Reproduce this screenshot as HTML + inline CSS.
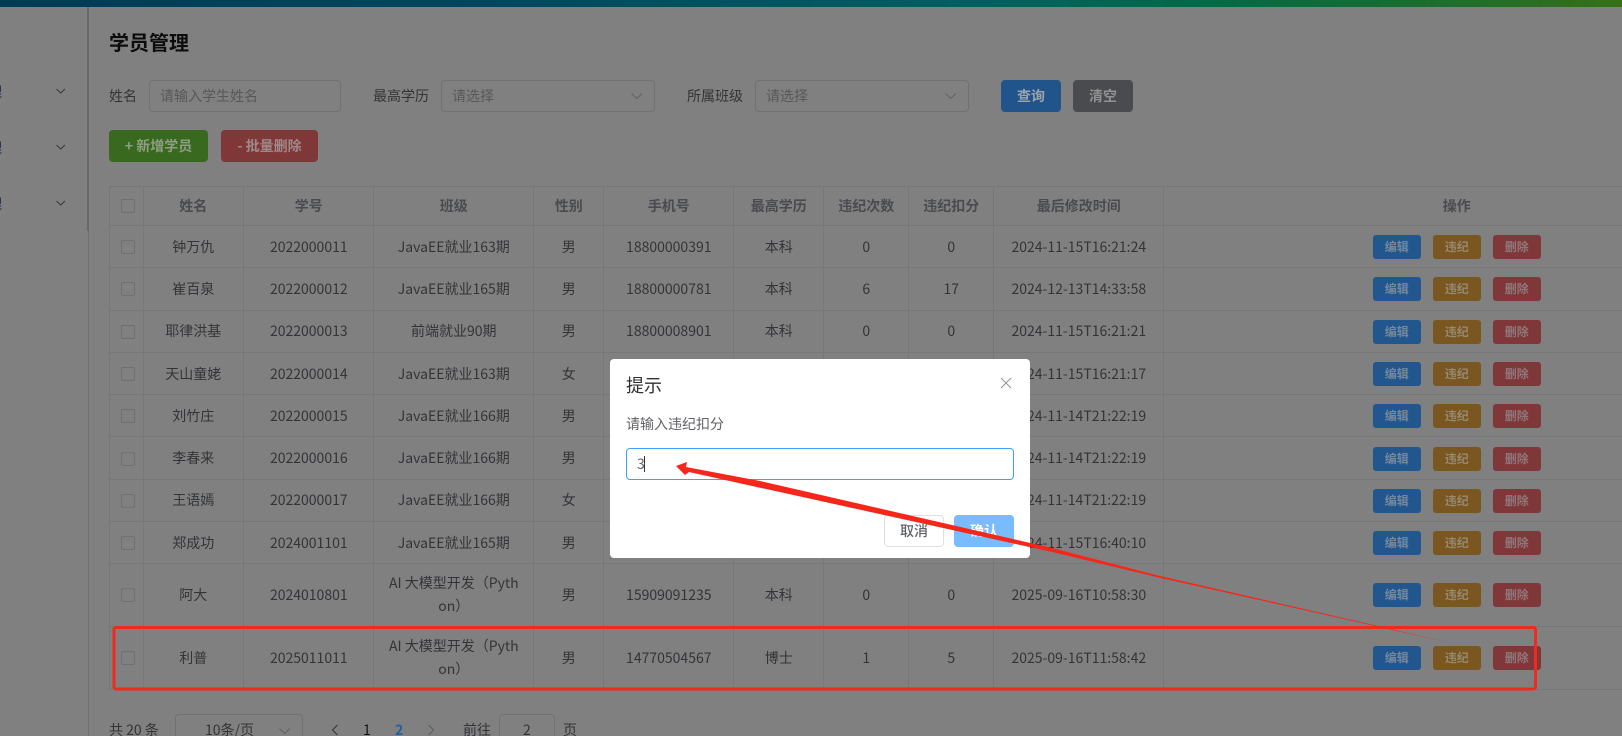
<!DOCTYPE html>
<html lang="zh">
<head>
<meta charset="utf-8">
<title>学员管理</title>
<style>
*{box-sizing:border-box;margin:0;padding:0}
html,body{width:1622px;height:736px;overflow:hidden;background:#808080}
body{position:relative;font-family:"Noto Sans CJK SC","Liberation Sans",sans-serif;font-size:14px;color:#303133;filter:blur(.35px)}
.a{position:absolute}
#top{left:0;top:0;width:1622px;height:7px;background:linear-gradient(to right,#003a55 0%,#00465f 30%,#006060 60%,#006a45 75%,#357018 100%)}
.ln1{left:87px;top:7px;width:2px;height:224px;background:#696969}
.ln2{left:88px;top:231px;width:1px;height:505px;background:#707070}
.side{left:-12px;width:14px;height:20px;line-height:20px;color:#1a2a4a}
h1{position:absolute;left:109px;top:28px;font-size:20px;line-height:28px;font-weight:700;color:#0c0c0c}
.lb{height:32px;line-height:33px;top:80px;color:#333436}
.ip{top:80px;height:32px;border:1px solid #707174;border-radius:4px;padding-left:10px;line-height:30px;color:#575859}
.chev{position:absolute;fill:none;stroke-width:1}
.btn{height:32px;line-height:33px;border-radius:4px;text-align:center;font-weight:700;color:#9aa2aa}
.tb{left:109px;top:186px;width:1642px;border-top:1px solid #757779;border-left:1px solid #757779}
.r{display:flex;height:42.3px;border-bottom:1px solid #757779;color:#333437}
.r.h{height:39px;font-weight:700;color:#4a4b4e}
.r.t{height:63px}
.r>div{border-right:1px solid #757779;display:flex;align-items:center;justify-content:center;text-align:center;line-height:23px;flex:none;padding-top:1px}
.r.h>div,.r.t>div{padding-top:0}
.r>div:nth-child(1){width:34.3px;padding-left:2px}
.r>div:nth-child(2){width:100px;padding-right:1px}
.r>div:nth-child(3){width:130px}
.r>div:nth-child(4){width:160px}
.r>div:nth-child(5){width:70px}
.r>div:nth-child(6){width:130px}
.r>div:nth-child(7){width:90px}
.r>div:nth-child(8){width:85px}
.r>div:nth-child(9){width:85px}
.r>div:nth-child(10){width:170px}
.r>div:nth-child(11){width:585px;gap:12px;border-right:0}
i.c{display:block;width:14px;height:14px;border:1px solid #6e7073;border-radius:2px}
b.o{display:block;width:48px;height:24px;line-height:24px;border-radius:3px;font-size:12px;font-weight:700}
b.e{background:#22568e;color:#76899c}
b.w{background:#7a5620;color:#968970}
b.d{background:#803739;color:#8f787a}
#dlg{left:610px;top:359px;width:420px;height:199px;background:#fff;border-radius:4px}
#pg span{position:absolute;top:720px;line-height:20px;color:#333437;white-space:nowrap}
</style>
</head>
<body>
<div class="a" id="top"></div>
<div class="a ln1"></div>
<div class="a ln2"></div>

<div class="a side" style="top:82px">理</div>
<div class="a side" style="top:138px">理</div>
<div class="a side" style="top:194px">理</div>
<svg class="chev" style="left:54px;top:85px" width="14" height="12"><path d="M2.5 4l4.2 4 4.2-4" stroke="#383838"/></svg>
<svg class="chev" style="left:54px;top:141px" width="14" height="12"><path d="M2.5 4l4.2 4 4.2-4" stroke="#383838"/></svg>
<svg class="chev" style="left:54px;top:197px" width="14" height="12"><path d="M2.5 4l4.2 4 4.2-4" stroke="#383838"/></svg>

<h1>学员管理</h1>

<div class="a lb" style="left:109px">姓名</div>
<div class="a ip" style="left:149px;width:192px">请输入学生姓名</div>
<div class="a lb" style="left:373px">最高学历</div>
<div class="a ip" style="left:441px;width:214px">请选择</div>
<svg class="chev" style="left:630px;top:90px" width="14" height="12"><path d="M1.5 3.5l5.2 5 5.2-5" stroke="#606265"/></svg>
<div class="a lb" style="left:687px">所属班级</div>
<div class="a ip" style="left:755px;width:214px">请选择</div>
<svg class="chev" style="left:944px;top:90px" width="14" height="12"><path d="M1.5 3.5l5.2 5 5.2-5" stroke="#606265"/></svg>
<div class="a btn" style="left:1001px;top:80px;width:60px;background:#22548c">查询</div>
<div class="a btn" style="left:1073px;top:80px;width:60px;background:#4a4b4e;color:#929294">清空</div>
<div class="a btn" style="left:109px;top:130px;width:99px;background:#38691f;color:#8e9f84">+ 新增学员</div>
<div class="a btn" style="left:221px;top:130px;width:97px;background:#803738;color:#9e898b">- 批量删除</div>

<div class="a tb">
<div class="r h"><div><i class="c"></i></div><div>姓名</div><div>学号</div><div>班级</div><div>性别</div><div>手机号</div><div>最高学历</div><div>违纪次数</div><div>违纪扣分</div><div>最后修改时间</div><div>操作</div></div>
<div class="r"><div><i class="c"></i></div><div>钟万仇</div><div>2022000011</div><div>JavaEE就业163期</div><div>男</div><div>18800000391</div><div>本科</div><div>0</div><div>0</div><div>2024-11-15T16:21:24</div><div><b class="o e">编辑</b><b class="o w">违纪</b><b class="o d">删除</b></div></div>
<div class="r"><div><i class="c"></i></div><div>崔百泉</div><div>2022000012</div><div>JavaEE就业165期</div><div>男</div><div>18800000781</div><div>本科</div><div>6</div><div>17</div><div>2024-12-13T14:33:58</div><div><b class="o e">编辑</b><b class="o w">违纪</b><b class="o d">删除</b></div></div>
<div class="r"><div><i class="c"></i></div><div>耶律洪基</div><div>2022000013</div><div>前端就业90期</div><div>男</div><div>18800008901</div><div>本科</div><div>0</div><div>0</div><div>2024-11-15T16:21:21</div><div><b class="o e">编辑</b><b class="o w">违纪</b><b class="o d">删除</b></div></div>
<div class="r"><div><i class="c"></i></div><div>天山童姥</div><div>2022000014</div><div>JavaEE就业163期</div><div>女</div><div>18800009201</div><div>本科</div><div>0</div><div>0</div><div>2024-11-15T16:21:17</div><div><b class="o e">编辑</b><b class="o w">违纪</b><b class="o d">删除</b></div></div>
<div class="r"><div><i class="c"></i></div><div>刘竹庄</div><div>2022000015</div><div>JavaEE就业166期</div><div>男</div><div>18800009401</div><div>本科</div><div>0</div><div>0</div><div>2024-11-14T21:22:19</div><div><b class="o e">编辑</b><b class="o w">违纪</b><b class="o d">删除</b></div></div>
<div class="r"><div><i class="c"></i></div><div>李春来</div><div>2022000016</div><div>JavaEE就业166期</div><div>男</div><div>18800009601</div><div>本科</div><div>0</div><div>0</div><div>2024-11-14T21:22:19</div><div><b class="o e">编辑</b><b class="o w">违纪</b><b class="o d">删除</b></div></div>
<div class="r"><div><i class="c"></i></div><div>王语嫣</div><div>2022000017</div><div>JavaEE就业166期</div><div>女</div><div>18800009801</div><div>本科</div><div>0</div><div>0</div><div>2024-11-14T21:22:19</div><div><b class="o e">编辑</b><b class="o w">违纪</b><b class="o d">删除</b></div></div>
<div class="r"><div><i class="c"></i></div><div>郑成功</div><div>2024001101</div><div>JavaEE就业165期</div><div>男</div><div>18800009901</div><div>本科</div><div>0</div><div>0</div><div>2024-11-15T16:40:10</div><div><b class="o e">编辑</b><b class="o w">违纪</b><b class="o d">删除</b></div></div>
<div class="r t"><div><i class="c"></i></div><div>阿大</div><div>2024010801</div><div>AI 大模型开发（Pyth<br>on）</div><div>男</div><div>15909091235</div><div>本科</div><div>0</div><div>0</div><div>2025-09-16T10:58:30</div><div><b class="o e">编辑</b><b class="o w">违纪</b><b class="o d">删除</b></div></div>
<div class="r t"><div><i class="c"></i></div><div>利普</div><div>2025011011</div><div>AI 大模型开发（Pyth<br>on）</div><div>男</div><div>14770504567</div><div>博士</div><div>1</div><div>5</div><div>2025-09-16T11:58:42</div><div><b class="o e">编辑</b><b class="o w">违纪</b><b class="o d">删除</b></div></div>
</div>

<div id="pg">
<span style="left:109px">共 20 条</span>
<div class="a" style="left:175px;top:714px;width:128px;height:32px;border:1px solid #707174;border-radius:4px"></div>
<span style="left:205px">10条/页</span>
<svg class="chev" style="left:278px;top:725px" width="14" height="12"><path d="M1.5 3.5l5.2 5 5.2-5" stroke="#606265"/></svg>
<svg class="chev" style="left:329px;top:723px" width="12" height="14"><path d="M8.5 2l-5 5 5 5" stroke="#333437"/></svg>
<span style="left:363px;color:#111">1</span>
<span style="left:395px;color:#245f9e;font-weight:700">2</span>
<svg class="chev" style="left:425px;top:723px" width="12" height="14"><path d="M3.5 2l5 5-5 5" stroke="#5c5d60"/></svg>
<span style="left:463px">前往</span>
<div class="a" style="left:499px;top:714px;width:56px;height:32px;border:1px solid #707174;border-radius:4px"></div>
<span style="left:523px">2</span>
<span style="left:563px">页</span>
</div>

<div class="a" id="dlg">
<div class="a" style="left:16px;top:13px;font-size:18px;line-height:26px;color:#303133">提示</div>
<svg class="a" style="left:389px;top:17px" width="14" height="14"><path d="M2 2l10 10M12 2L2 12" stroke="#909399" fill="none" stroke-width="1"/></svg>
<div class="a" style="left:16px;top:55px;line-height:20px;color:#606266">请输入违纪扣分</div>
<div class="a" style="left:16px;top:89px;width:388px;height:32px;border:1px solid #409eff;border-radius:4px;padding-left:10px;line-height:30px;color:#606266">3<span class="a" style="left:17px;top:7px;width:1px;height:16px;background:#333"></span></div>
<div class="a" style="left:274px;top:156px;width:60px;height:32px;border:1px solid #dcdfe6;border-radius:4px;text-align:center;line-height:30px;color:#606266;font-weight:500">取消</div>
<div class="a" style="left:344px;top:156px;width:60px;height:32px;background:#79bbff;border-radius:4px;text-align:center;line-height:33px;color:#fff;font-weight:700">确认</div>
</div>

<svg class="a" style="left:0;top:0" width="1622" height="736">
<rect x="114" y="627.5" width="1421.5" height="61.5" rx="2" fill="none" stroke="#ef2a1e" stroke-width="3"/>
<polygon fill="#f5261a" points="676,466 687,462 686,467 760,481 1050,547.5 1159,575.8 1377,625.7 1450,643 1377,626.5 1159,577.6 1050,551.5 760,487.7 689,472 685,475"/>
</svg>
</body>
</html>
